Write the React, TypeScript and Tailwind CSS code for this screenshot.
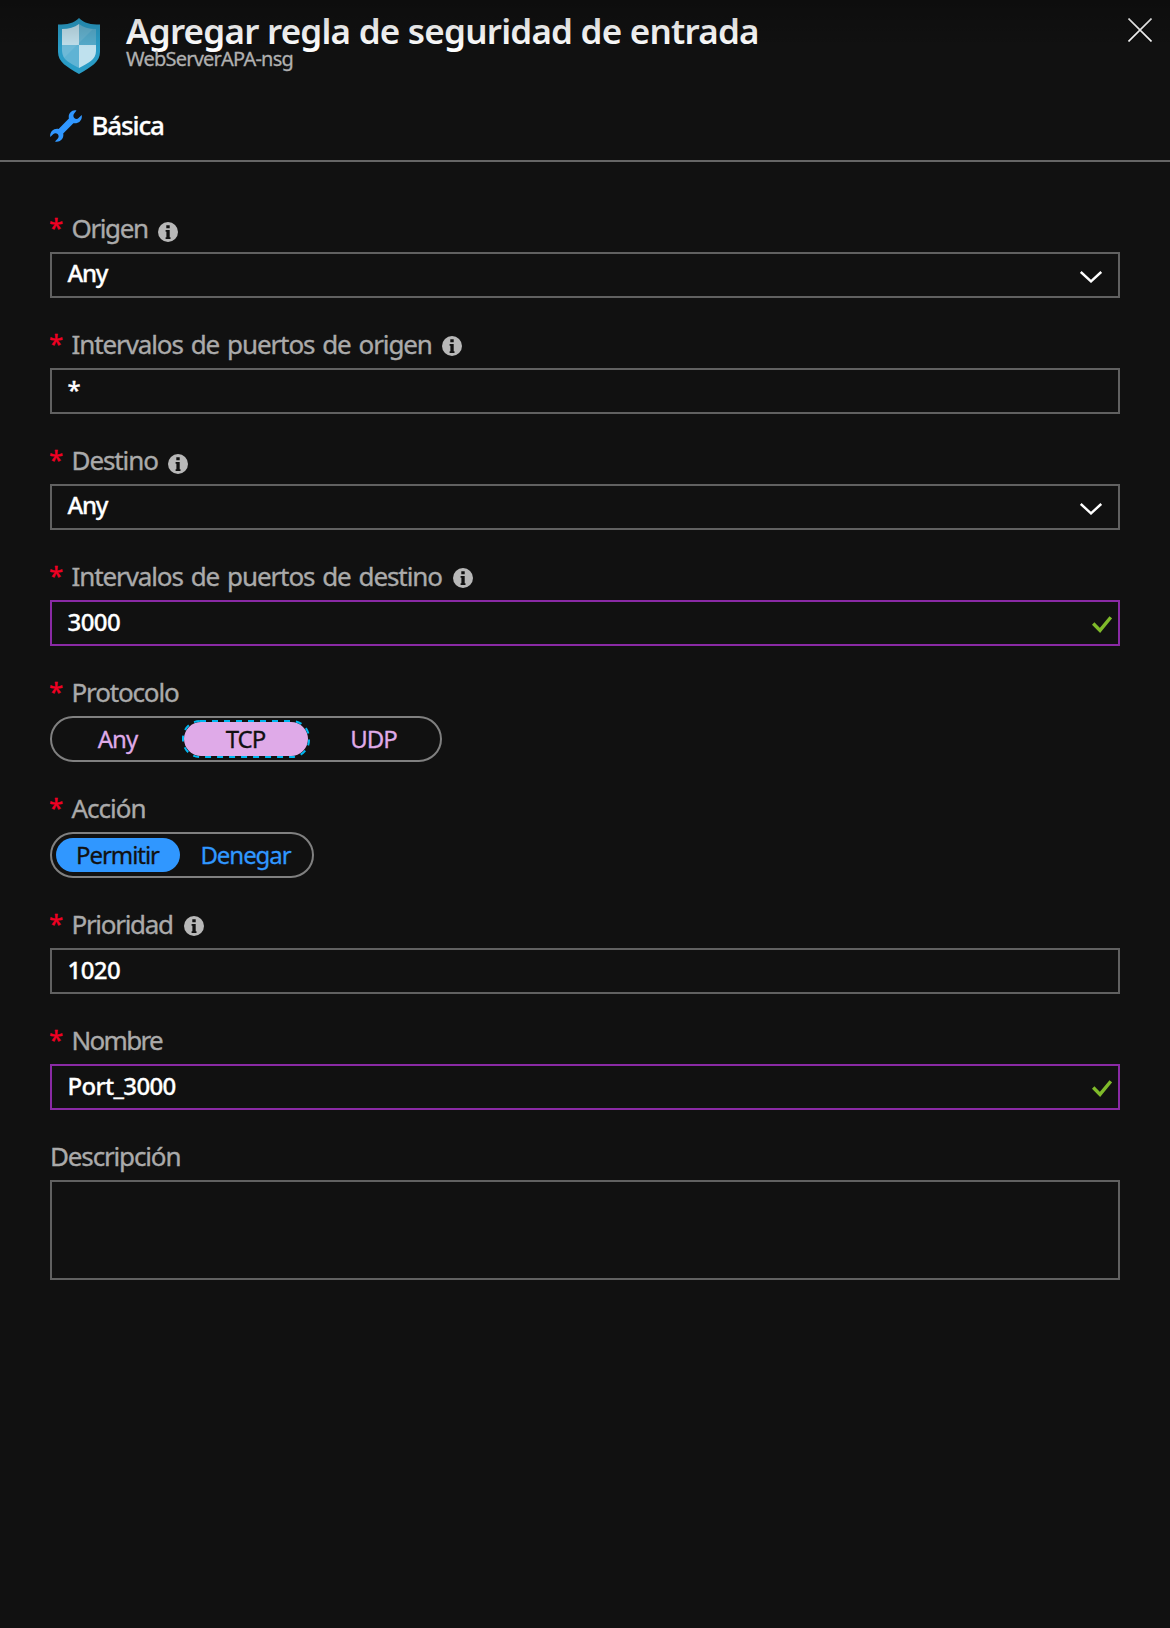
import type { ReactNode } from "react";

function ShieldIcon() {
  return (
    <svg className="block h-14 w-[42px]" viewBox="0 0 42 56">
      <path d="M21 0C16 5.3 9 6.600 0 6.600V34C0 44 9 49 21 56C33 49 42 44 42 34V6.600C33 6.600 26 5.300 21 0Z" fill="#2a9cc6" />
      <path d="M21 6C16.500 9.500 11 11 4 11V27H21Z" fill="#b9dce9" />
      <path d="M21 6C25.500 9.500 31 11 38 11V27H21Z" fill="#55abcb" />
      <path d="M4 27H21V50C12 45 4 42 4 33Z" fill="#5fb3d4" />
      <path d="M38 27H21V50C30 45 38 42 38 33Z" fill="#bfe1ee" />
      <path d="M4 11C11 11 16.500 9.500 21 6C25.500 9.500 30 10.600 35 11L6 40L4 33Z" fill="#fff" opacity="0.09" />
    </svg>
  );
}

function WrenchIcon() {
  return (
    <svg className="block size-8" viewBox="0 0 32 32" fill="#3097ff">
      <path d="M26.500 .5C22 -.8 17.800 3.500 18.900 8.600L8.600 18.900C3.500 17.900 -.6 22 .3 27L3.400 24C4.600 22.800 6.500 22.900 7.600 24.100C8.900 25.400 8.900 27.300 7.800 28.500L5 31.500C10 32.800 14.300 28.500 13.200 23.400L23.400 13.200C28.500 14.200 32.700 10 31.700 5L28.600 8.100C27.400 9.300 25.500 9.200 24.300 8C23.100 6.700 23.100 4.800 24.200 3.600Z" />
    </svg>
  );
}

function InfoIcon() {
  return (
    <svg className="block size-5" viewBox="0 0 20 20">
      <circle cx="10" cy="10" r="10" fill="#b8b8b8" />
      <path d="M8.300 3.300h3.400v3H8.300zM7.600 8h4.100v7.300h.8v1.700H7.600v-1.700h.8V9.700H7.600z" fill="#111" />
    </svg>
  );
}

function Chevron() {
  return (
    <svg className="block h-3 w-[22px]" viewBox="0 0 22 12" fill="none" stroke="#fff" strokeWidth="2.400">
      <path d="M.8 1L11 10.400L21.200 1" />
    </svg>
  );
}

function Check() {
  return (
    <svg className="block h-[17px] w-5" viewBox="0 0 20 17" fill="none" stroke="#7fba2a" strokeWidth="3.400">
      <path d="M1.200 7.500L8 14.400L18.800 1.300" />
    </svg>
  );
}

type FieldProps = {
  label: string;
  tracking: string;
  required?: boolean;
  info?: string;
  children: ReactNode;
};

function Field({ label, tracking, required = true, info, children }: FieldProps) {
  return (
    <div>
      <div className="flex h-9 text-[26px] text-[#aaa] [-webkit-text-stroke:0.35px]">
        {required && <span className="-ml-px w-[22.5px] shrink-0 leading-[22px] text-[#f00023]">*</span>}
        <span className={`leading-6 whitespace-nowrap ${tracking}`}>{label}</span>
        {info && (
          <span className={info}>
            <InfoIcon />
          </span>
        )}
      </div>
      {children}
    </div>
  );
}

type BoxProps = { value: string; tracking: string; kind?: "select" | "valid" | "text" };

function Box({ value, tracking, kind = "text" }: BoxProps) {
  return (
    <div
      className={`flex h-[46px] items-center justify-between border-2 pl-[15.5px] text-[24px] font-medium text-white [-webkit-text-stroke:0.3px] ${
        kind === "valid" ? "border-[#8a2aa5] pr-1.5" : "border-[#616161] pr-4"
      }`}
    >
      <span className={`${kind === "select" ? "pb-1" : "pb-0.5"} leading-9 ${tracking}`}>{value}</span>
      {kind === "select" && <span className="pt-1"><Chevron /></span>}
      {kind === "valid" && <span className="pt-0.5"><Check /></span>}
    </div>
  );
}

export default function App() {
  return (
    <div className="relative h-[1628px] w-[1170px] overflow-hidden bg-[#111] font-['Noto_Sans',sans-serif]">
      <header className="h-[162px] border-b-2 border-[#666]">
        <div className="flex h-[102px] pl-[57px]">
          <div className="pt-[18px] pl-[0.5px]">
            <ShieldIcon />
          </div>
          <div className="ml-[26.5px] flex-1 pt-[7px]">
            <h1 className="h-10 whitespace-nowrap text-[35px] leading-[48px] font-semibold tracking-[-0.77px] text-white">
              Agregar regla de seguridad de entrada
            </h1>
            <p className="text-[20px] leading-6 tracking-[-0.77px] text-[#b0b0b0] [-webkit-text-stroke:0.3px]">WebServerAPA-nsg</p>
          </div>
          <svg className="mt-[18px] mr-[18px] block size-6" viewBox="0 0 24 24" stroke="#fff" strokeWidth="1.600">
            <path d="M.5 .5L23.500 23.500M23.500 .5L.5 23.500" />
          </svg>
        </div>
        <div className="flex pt-2 pl-[50px]">
          <WrenchIcon />
          <span className="-mt-[3px] ml-[9.5px] text-[26px] leading-9 font-medium tracking-[-1.15px] text-white [-webkit-text-stroke:0.3px]">
            Básica
          </span>
        </div>
      </header>

      <main className="flex flex-col gap-[34px] px-[50px] pt-[54px]">
        <Field label="Origen" tracking="tracking-[-1.4px]" info="ml-2.5 mt-1.5">
          <Box value="Any" tracking="tracking-[-1.3px]" kind="select" />
        </Field>
        <Field label="Intervalos de puertos de origen" tracking="tracking-[-1.1px] [word-spacing:2.2px]" info="ml-2.5 mt-1">
          <Box value="*" tracking="tracking-normal" />
        </Field>
        <Field label="Destino" tracking="tracking-[-1.1px]" info="ml-[10.5px] mt-1.5">
          <Box value="Any" tracking="tracking-[-1.3px]" kind="select" />
        </Field>
        <Field label="Intervalos de puertos de destino" tracking="tracking-[-1.1px] [word-spacing:2.2px]" info="ml-[11.5px] mt-1">
          <Box value="3000" tracking="tracking-[-0.6px]" kind="valid" />
        </Field>
        <Field label="Protocolo" tracking="tracking-[-1.15px]">
          <div className="flex h-[46px] w-[392px] gap-1 rounded-full border-2 border-[#808080] p-1 text-center text-[24px] leading-[34px] tracking-[-1px] text-[#dfaae8] [-webkit-text-stroke:0.3px]">
            <span className="w-[124px] pr-px">Any</span>
            <span className="relative w-[124px] rounded-full bg-[#dfaae8] pr-px text-[#111]">
              TCP
              <svg className="absolute -top-0.5 -left-0.5 block h-[38px] w-[128px]" viewBox="0 0 128 38" fill="none">
                <rect x="1" y="1" width="126" height="36" rx="17" stroke="#00b7f0" strokeWidth="2" strokeDasharray="6 6" />
              </svg>
            </span>
            <span className="w-[124px] pr-px">UDP</span>
          </div>
        </Field>
        <Field label="Acción" tracking="tracking-[-1px]">
          <div className="flex h-[46px] w-[264px] gap-1 rounded-full border-2 border-[#808080] p-1 text-center text-[24px] leading-[34px] tracking-[-1.05px] text-[#3097ff] [-webkit-text-stroke:0.3px]">
            <span className="w-[124px] rounded-full bg-[#3097ff] pr-px text-[#111]">Permitir</span>
            <span className="w-[124px] pr-px">Denegar</span>
          </div>
        </Field>
        <Field label="Prioridad" tracking="tracking-[-1.3px]" info="ml-[11.5px] mt-1">
          <Box value="1020" tracking="tracking-[-0.6px]" />
        </Field>
        <Field label="Nombre" tracking="tracking-[-1.7px]">
          <Box value="Port_3000" tracking="tracking-[-0.65px]" kind="valid" />
        </Field>
        <Field label="Descripción" tracking="tracking-[-1.15px]" required={false}>
          <div className="h-[100px] border-2 border-[#616161]" />
        </Field>
      </main>
      <div className="pointer-events-none absolute inset-x-0 top-0 h-12 bg-linear-to-b from-black/25 to-transparent" />
    </div>
  );
}
